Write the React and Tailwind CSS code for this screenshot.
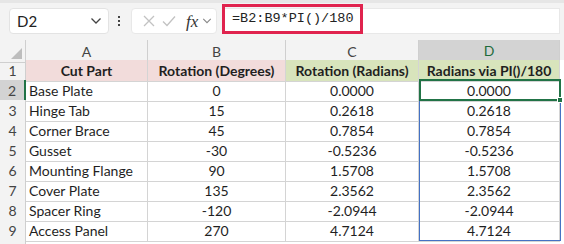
import React from "react";

// Sheet data
const rows = [
  ["Base Plate", "0", "0.0000", "0.0000"],
  ["Hinge Tab", "15", "0.2618", "0.2618"],
  ["Corner Brace", "45", "0.7854", "0.7854"],
  ["Gusset", "-30", "-0.5236", "-0.5236"],
  ["Mounting Flange", "90", "1.5708", "1.5708"],
  ["Cover Plate", "135", "2.3562", "2.3562"],
  ["Spacer Ring", "-120", "-2.0944", "-2.0944"],
  ["Access Panel", "270", "4.7124", "4.7124"],
];

const cols = "grid grid-cols-[26px_122px_138px_133px_141px]";

const Chevron = ({ className }) => (
  <svg width="12" height="8" viewBox="0 0 12 8" className={className}>
    <path d="M1.5 1.5 L6 6 L10.5 1.5" fill="none" stroke="currentColor" strokeWidth="1.3" />
  </svg>
);

const App = () => {
  return (
    <div className="w-[564px] h-[244px] overflow-hidden bg-[#f3f3f3] font-['Lato',sans-serif] text-[14px] text-[#1f1f1f]">
      {/* Formula bar */}
      <div className="h-[40px] border-t-[3px] border-[#e6e6e6] flex items-start pt-[5px] pr-[4px]">
        <div className="ml-[9px] w-[100px] h-[26px] bg-white rounded-[4px] border border-[#e3e3e3] flex items-center justify-between pl-[7px] pr-[6px]">
          <span className="text-[15px] text-[#222]">D2</span>
          <Chevron className="text-[#444]" />
        </div>
        <div className="w-[20px] h-[26px] flex flex-col items-center justify-center gap-[2px]">
          <span className="w-[2px] h-[2px] bg-[#444]" />
          <span className="w-[2px] h-[2px] bg-[#444]" />
          <span className="w-[2px] h-[2px] bg-[#444]" />
        </div>
        <div className="ml-[2px] w-[86px] h-[26px] bg-white rounded-[4px] border border-[#e8e8e8] flex items-center pl-[11px] gap-[4px]">
          <svg width="12" height="12" viewBox="0 0 12 12">
            <path d="M1 1 L11 11 M11 1 L1 11" stroke="#c2c2c2" strokeWidth="1.3" />
          </svg>
          <svg width="14" height="12" viewBox="0 0 14 12" className="ml-[3px]">
            <path d="M1 6.5 L5 10.5 L13 1.5" fill="none" stroke="#c2c2c2" strokeWidth="1.3" />
          </svg>
          <span className="ml-[6px] font-['Liberation_Serif',serif] italic text-[17px] leading-none text-[#333]">fx</span>
          <Chevron className="text-[#888] w-[10px]" />
        </div>
        <div className="relative ml-[5px] flex-1 h-[26px] bg-white border border-[#e8e8e8]">
          <div className="absolute left-[-1px] top-[-5px] w-[141px] h-[30px] border-[3px] border-[#e0234e] flex items-center pl-[7px]">
            <span className="font-['Liberation_Mono',monospace] text-[13.5px] text-[#222]">=B2:B9*PI()/180</span>
          </div>
        </div>
      </div>

      {/* Grid */}
      <div className="relative bg-white">
        <div className={`${cols} h-[20px] bg-[#f3f3f3] text-[#444]`}>
          <div className="relative border-r border-b border-[#cfcfcf]">
            <div className="absolute right-[3px] bottom-[3px] w-0 h-0 border-l-[11px] border-l-transparent border-b-[11px] border-b-[#bdbdbd]" />
          </div>
          {["A", "B", "C"].map((c) => (
            <div key={c} className="flex items-center justify-center border-r border-b border-[#cfcfcf]">
              {c}
            </div>
          ))}
          <div className="flex items-center justify-center bg-[#d3d3d3] text-[#1e6b3c] border-r border-[#cfcfcf] border-b-2 border-b-[#217346]">
            D
          </div>
        </div>

        <div className={`${cols} h-[20px] font-bold`}>
          <div className="flex items-center justify-center bg-[#f3f3f3] text-[#444] font-normal border-r border-b border-[#cfcfcf]">1</div>
          <div className="flex items-center justify-center bg-[#f2dcdb] border-r border-b border-[#d4d4d4]">Cut Part</div>
          <div className="flex items-center justify-center bg-[#f2dcdb] border-r border-b border-[#d4d4d4]">Rotation (Degrees)</div>
          <div className="flex items-center justify-center bg-[#d8e4bc] border-r border-b border-[#d4d4d4]">Rotation (Radians)</div>
          <div className="flex items-center justify-center bg-[#d8e4bc] border-r border-b border-[#d4d4d4]">Radians via PI()/180</div>
        </div>

        {rows.map((r, i) => (
          <div key={i} className={`${cols} h-[20px]`}>
            <div
              className={
                i === 0
                  ? "flex items-center justify-center bg-[#d3d3d3] text-[#444] border-r-2 border-r-[#217346] border-b border-[#cfcfcf]"
                  : "flex items-center justify-center bg-[#f3f3f3] text-[#444] border-r border-b border-[#cfcfcf]"
              }
            >
              {i + 2}
            </div>
            <div className="flex items-center pl-[3px] border-r border-b border-[#d4d4d4]">{r[0]}</div>
            <div className="flex items-center justify-center border-r border-b border-[#d4d4d4]">{r[1]}</div>
            <div className="flex items-center justify-center border-r border-b border-[#d4d4d4]">{r[2]}</div>
            <div className="flex items-center justify-center border-r border-b border-[#d4d4d4]">{r[3]}</div>
          </div>
        ))}

        <div className={`${cols} h-[4px]`}>
          <div className="bg-[#f3f3f3] border-r border-[#cfcfcf]" />
        </div>

        {/* Selection overlays */}
        <div className="absolute left-[419px] top-[40px] w-[142px] h-[161px] border-[1.5px] border-[#4472c4] pointer-events-none" />
        <div className="absolute left-[419px] top-[39px] w-[142px] h-[22px] border-2 border-[#217346] pointer-events-none" />
        <div className="absolute left-[557px] top-[57px] w-[6px] h-[6px] bg-[#217346] border border-white" />
      </div>
    </div>
  );
};

export default App;
